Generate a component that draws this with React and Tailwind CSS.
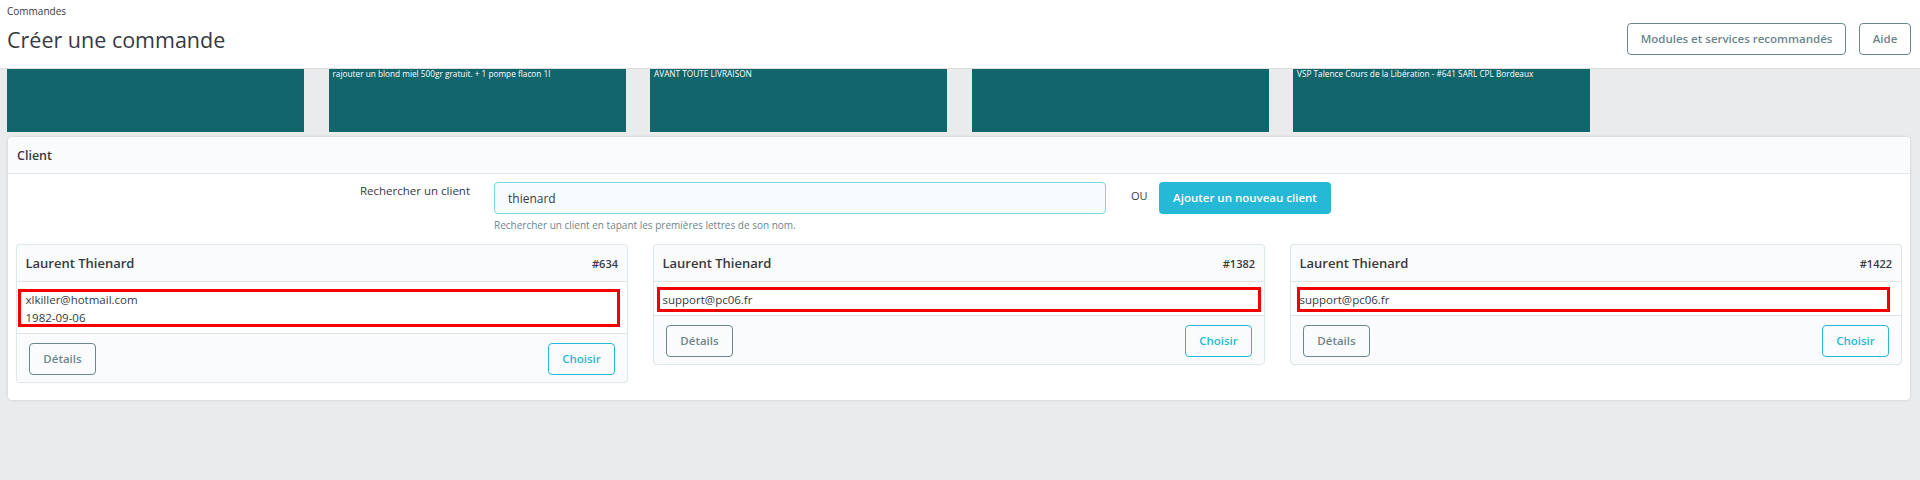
const notes = [
  "",
  "rajouter un blond miel 500gr gratuit. + 1 pompe flacon 1l",
  "AVANT TOUTE LIVRAISON",
  "",
  "VSP Talence Cours de la Libération - #641 SARL CPL Bordeaux",
];

const customers = [
  {
    id: "#634",
    lines: ["xlkiller@hotmail.com", "1982-09-06"],
    redBox: "left-[1px] right-[7px] top-[7px] h-[38px]",
  },
  {
    id: "#1382",
    lines: ["support@pc06.fr"],
    redBox: "left-[3px] right-[3px] top-[5px] h-[25px]",
  },
  {
    id: "#1422",
    lines: ["support@pc06.fr"],
    redBox: "left-[6px] right-[11px] top-[5px] h-[25px]",
  },
];

const CustomerCard = ({ customer }) => (
  <div className="self-start bg-[#fafbfc] border border-[#dfe8ea] rounded-[4px] shadow-[0_0_2px_rgba(0,0,0,0.06)]">
    <div className="h-[37px] flex items-center justify-between pt-[2px] pl-[8.5px] pr-[9px] border-b border-[#dfe5e7]">
      <span className="text-[13px] font-semibold text-[#363a41]">Laurent Thienard</span>
      <span className="text-[11px] font-semibold text-[#363a41]">{customer.id}</span>
    </div>
    <div className="relative bg-white pl-[8.5px] pt-[9px] pb-[6px] border-b border-[#dfe5e7] text-[11.5px] leading-[18px] text-[#363a41]">
      {customer.lines.map((line) => (
        <div key={line}>{line}</div>
      ))}
      <div className={`absolute border-[3px] border-[#f50000] ${customer.redBox}`}></div>
    </div>
    <div className="flex justify-between pl-[12px] pr-[12px] pt-[9px] pb-[7px]">
      <button className="w-[67px] h-[32px] border border-[#6c868e] rounded-[4px] text-[11.5px] font-semibold text-[#6c868e] bg-transparent">
        Détails
      </button>
      <button className="w-[67px] h-[32px] border border-[#25b9d7] rounded-[4px] text-[11.5px] font-semibold text-[#25b9d7] bg-transparent">
        Choisir
      </button>
    </div>
  </div>
);

export default function App() {
  return (
    <div className="min-h-[480px] bg-[#eaebec] font-['Open_Sans',sans-serif] text-[#363a41]">
      {/* Page header */}
      <div className="h-[69px] bg-white border-b border-[#dddddd] flex justify-between pl-[7px] pr-[9px]">
        <div>
          <div className="text-[10px] leading-[14px] pt-[4px] text-[#363a41]">Commandes</div>
          <h1 className="text-[21.5px] leading-[30px] mt-[7px] text-[#363a41]">Créer une commande</h1>
        </div>
        <div className="flex gap-[13px] pt-[23px]">
          <button className="w-[219px] h-[32px] border border-[#6c868e] rounded-[4px] text-[11.5px] font-semibold whitespace-nowrap text-[#6c868e]">
            Modules et services recommandés
          </button>
          <button className="w-[52px] h-[32px] border border-[#6c868e] rounded-[4px] text-[11.5px] font-semibold text-[#6c868e]">
            Aide
          </button>
        </div>
      </div>

      {/* Order messages */}
      <div className="flex gap-[24.5px] pl-[7px]">
        {notes.map((note, i) => (
          <div
            key={i}
            className="w-[297px] h-[63px] bg-[#11666c] px-[4px] text-[8.25px] leading-[10px] text-white"
          >
            {note}
          </div>
        ))}
      </div>

      {/* Client panel */}
      <div className="mt-[5px] ml-[8px] mr-[10px] h-[263px] bg-white rounded-[4px] shadow-[0_0_3px_rgba(0,0,0,0.15)]">
        <div className="h-[37px] flex items-center pt-[2px] pl-[9px] bg-[#fafbfc] border-b border-[#dfe8ea] rounded-t-[4px] text-[12.5px] font-semibold">
          Client
        </div>
        <div className="flex h-[70px] pt-[8px]">
          <label className="w-[462px] text-right text-[11.5px] leading-[18px]">
            Rechercher un client
          </label>
          <div className="ml-[24px] w-[612px]">
            <input
              readOnly
              value="thienard"
              className="w-full h-[32px] bg-[#f6fcfe] border border-[#7cd5e7] rounded-[4px] pl-[13px] text-[12px] text-[#363a41] outline-none"
            />
            <div className="text-[10px] leading-[14px] mt-[4px] text-[#6c868e]">
              Rechercher un client en tapant les premières lettres de son nom.
            </div>
          </div>
          <span className="ml-[25px] w-[28px] text-[11px] leading-[18px] pt-[5px]">OU</span>
          <button className="h-[32px] w-[172px] bg-[#25b9d7] rounded-[4px] text-[11.5px] font-semibold whitespace-nowrap text-white">
            Ajouter un nouveau client
          </button>
        </div>
        <div className="grid grid-cols-3 gap-[25px] pl-[8px] pr-[8px]">
          {customers.map((customer) => (
            <CustomerCard key={customer.id} customer={customer} />
          ))}
        </div>
      </div>
    </div>
  );
}
